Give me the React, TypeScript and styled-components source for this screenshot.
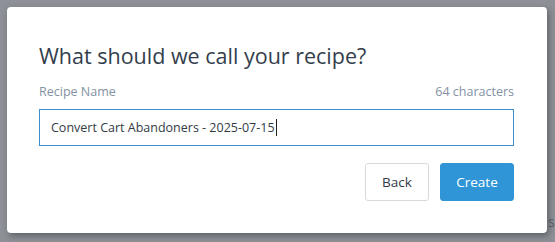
import React from "react";
import styled, { createGlobalStyle } from "styled-components";

const Global = createGlobalStyle`
  html, body { margin: 0; padding: 0; }
  body {
    background: #8d9096;
    font-family: "Open Sans", "Liberation Sans", sans-serif;
    width: 555px;
    height: 242px;
    overflow: hidden;
  }
`;

const Backdrop = styled.div`
  position: relative;
  width: 555px;
  height: 242px;
  padding: 7px 8px 9px 7px;
  box-sizing: border-box;
`;

const Behind = styled.span`
  position: absolute;
  left: 548px;
  top: 212px;
  font-size: 14px;
  color: #5c6068;
`;

const Modal = styled.div`
  position: relative;
  width: 540px;
  height: 226px;
  background: #ffffff;
  border-radius: 4px;
  box-shadow: 2px 3px 6px rgba(40, 44, 52, 0.45);
  box-sizing: border-box;
  padding: 34px 33px 0 32px;
  display: flex;
  flex-direction: column;
`;

const Title = styled.h2`
  margin: 0;
  font-size: 21.5px;
  font-weight: 400;
  color: #333e4c;
  line-height: 30px;
`;

const LabelRow = styled.div`
  margin-top: 12px;
  display: flex;
  justify-content: space-between;
  font-size: 12.5px;
  line-height: 18px;
  color: #8492a4;
`;

const Input = styled.div`
  margin-top: 8px;
  height: 37px;
  border: 1px solid #3b8fd0;
  box-sizing: border-box;
  display: flex;
  align-items: center;
  padding-left: 11px;
  font-size: 12.5px;
  color: #333b45;
`;

const Caret = styled.span`
  display: inline-block;
  width: 1px;
  height: 17px;
  background: #222;
  margin-left: 1px;
`;

const Actions = styled.div`
  margin-top: 17px;
  display: flex;
  justify-content: flex-end;
  gap: 11px;
`;

const Button = styled.button<{ $primary?: boolean }>`
  height: 38px;
  padding: 0;
  width: ${(p) => (p.$primary ? "74px" : "64px")};
  border-radius: 3px;
  font-family: "Open Sans", "Liberation Sans", sans-serif;
  font-size: 13.5px;
  border: 1px solid ${(p) => (p.$primary ? "#2f95d7" : "#d6d9dd")};
  background: ${(p) => (p.$primary ? "#2f95d7" : "#ffffff")};
  color: ${(p) => (p.$primary ? "#ffffff" : "#333b45")};
`;

export default function App() {
  return (
    <>
      <Global />
      <Backdrop>
        <Behind>s</Behind>
        <Modal>
          <Title>What should we call your recipe?</Title>
          <LabelRow>
            <span>Recipe Name</span>
            <span>64 characters</span>
          </LabelRow>
          <Input>
            Convert Cart Abandoners - 2025-07-15
            <Caret />
          </Input>
          <Actions>
            <Button>Back</Button>
            <Button $primary>Create</Button>
          </Actions>
        </Modal>
      </Backdrop>
    </>
  );
}
